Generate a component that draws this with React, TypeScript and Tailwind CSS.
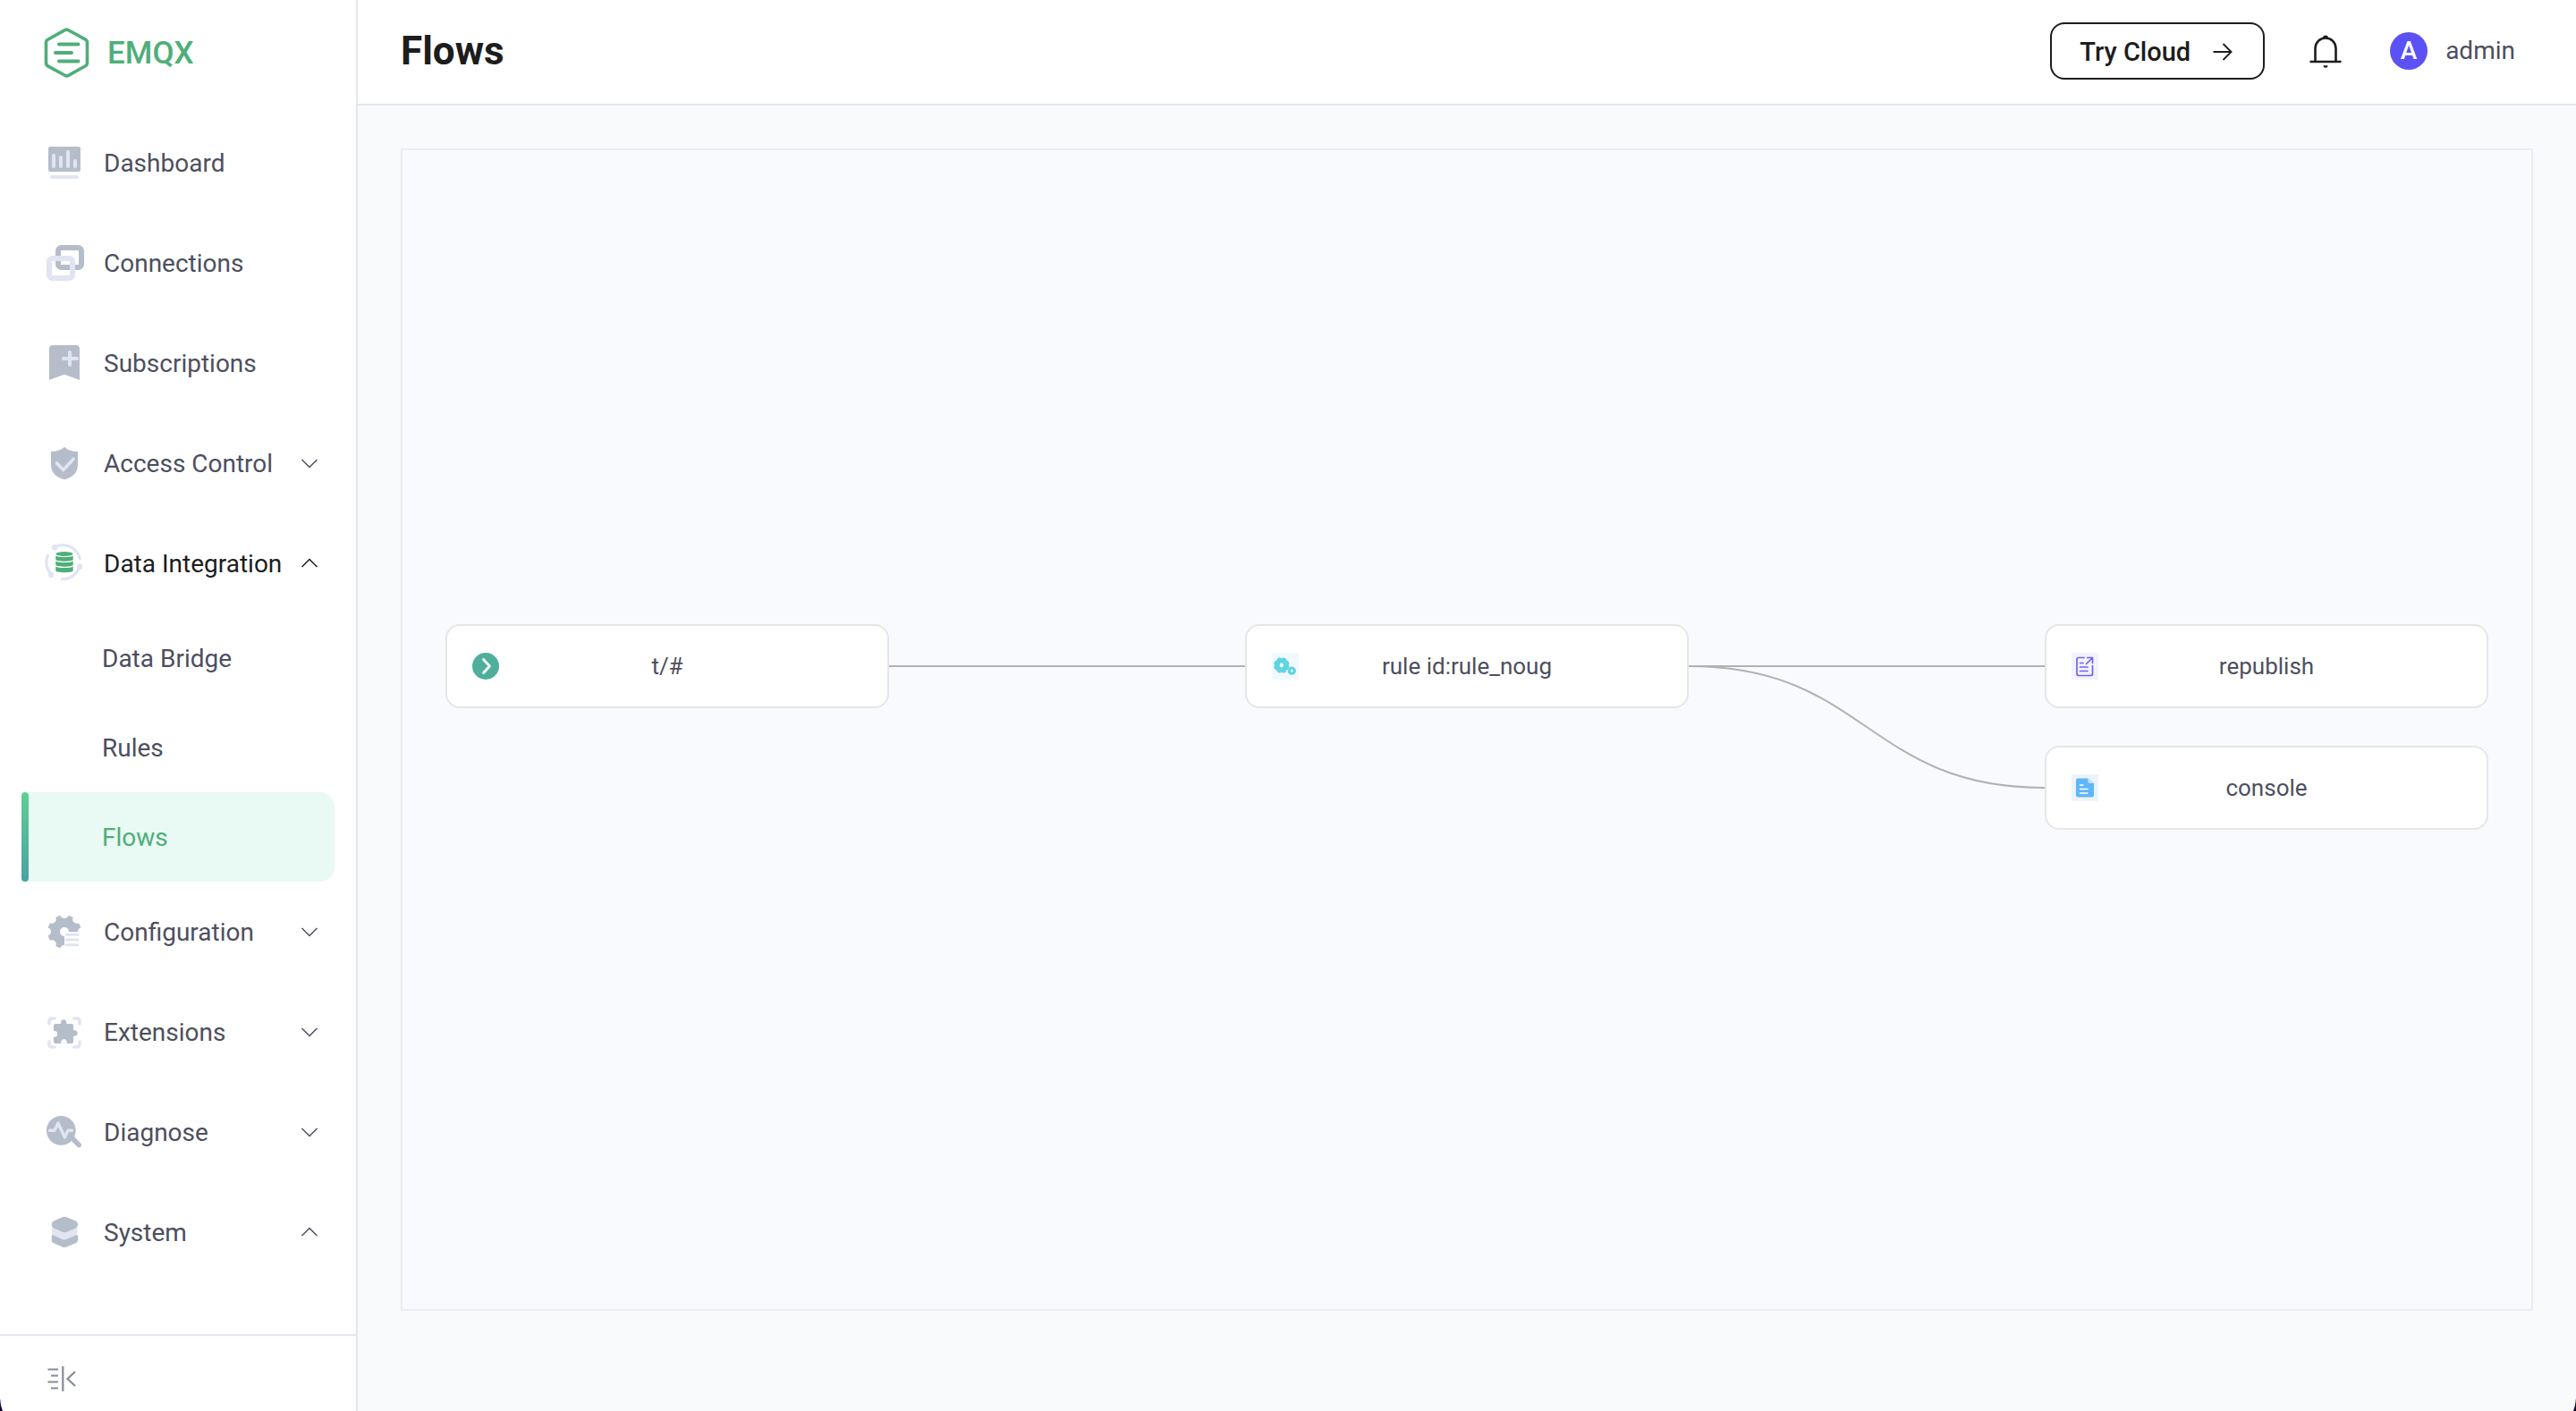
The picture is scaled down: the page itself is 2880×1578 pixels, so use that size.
import type { ReactNode } from "react";

const MUTED = "#b6bdca";
const LIGHT = "#e1e5f2";
const GREEN = "#4fae79";

function gearPath(cx: number, cy: number, r: number, half: number, notch: number, teeth = 8) {
  const at = (deg: number) => {
    const a = (deg * Math.PI) / 180;
    return `${(cx + r * Math.sin(a)).toFixed(2)} ${(cy - r * Math.cos(a)).toFixed(2)}`;
  };
  const step = 360 / teeth;
  let d = `M${at(-half)}`;
  for (let k = 0; k < teeth; k++) {
    d += `A${notch} ${notch} 0 0 0 ${at(k * step + half)}`;
    d += `A${r} ${r} 0 0 1 ${at((k + 1) * step - half)}`;
  }
  return d + "Z";
}

function MenuIcon({ children }: { children: ReactNode }) {
  return (
    <svg viewBox="0 0 48 48" className="size-12 shrink-0" fill="none" strokeLinecap="round" strokeLinejoin="round" aria-hidden="true">
      {children}
    </svg>
  );
}

const DashboardIcon = () => (
  <MenuIcon>
    <rect x="6" y="6" width="36" height="28" rx="2" fill={MUTED} />
    <path d="M12 16v12M20 18v10M28 12v16M36 22v6" stroke={LIGHT} strokeWidth="4" />
    <path d="M10 40h28" stroke={LIGHT} strokeWidth="4" />
  </MenuIcon>
);

const ConnectionsIcon = () => (
  <MenuIcon>
    <rect x="17" y="7" width="26" height="22" rx="3.5" stroke={MUTED} strokeWidth="6" />
    <rect x="7" y="19" width="26" height="22" rx="3.5" stroke={LIGHT} strokeWidth="6" />
  </MenuIcon>
);

const SubscriptionsIcon = () => (
  <MenuIcon>
    <path d="M7 43V8a4 4 0 0 1 4-4h26a4 4 0 0 1 4 4v35l-17-6.300z" fill={MUTED} />
    <path d="M23 19h15M30 12v14" stroke={LIGHT} strokeWidth="4" />
  </MenuIcon>
);

const AccessIcon = () => (
  <MenuIcon>
    <path d="M24 6c4 3.500 9 5 15 5v15c0 9-7 14.500-15 16.200C16 40.500 9 35 9 26V11c6 0 11-1.500 15-5z" fill={MUTED} />
    <path d="M15.500 24l7.300 7.500L34 19.500" stroke={LIGHT} strokeWidth="3.600" />
  </MenuIcon>
);

const IntegrationIcon = () => (
  <MenuIcon>
    <g stroke={LIGHT} strokeWidth="3.200" strokeLinecap="butt">
      <path d="M13 6A19.500 19.500 0 0 1 41.500 20" />
      <path d="M41 27A19.500 19.500 0 0 1 19.700 41.600" />
      <path d="M9 36A19.500 19.500 0 0 1 6 14" />
    </g>
    <g fill={LIGHT}>
      <circle cx="13.300" cy="6.200" r="3.300" />
      <circle cx="41" cy="27.700" r="3.300" />
      <circle cx="9" cy="36.700" r="3.300" />
    </g>
    <g fill={GREEN}>
      <ellipse cx="24" cy="13.500" rx="9.500" ry="2.600" />
      <path d="M14.300 15.500c3 2 16.400 2 19.400 0V20c-2 2.300-17.400 2.300-19.400 0z" />
      <path d="M14.300 21.500c3 2 16.400 2 19.400 0V26c-2 2.300-17.400 2.300-19.400 0z" />
      <path d="M14.300 27.500c3 2 16.400 2 19.400 0v5c-2 2.300-17.400 2.300-19.400 0z" />
    </g>
  </MenuIcon>
);

const ConfigurationIcon = () => (
  <MenuIcon>
    <path d={gearPath(24, 24, 18.8, 13.5, 4.6)} fill={MUTED} />
    <circle cx="24" cy="24" r="5" fill="#fff" />
    <path d="M24 24h22v22H24z" fill="#fff" />
    <path d="M26 27.300h13M26 33h13M26 38.700h13" stroke={LIGHT} strokeWidth="3" />
  </MenuIcon>
);

const ExtensionsIcon = () => (
  <MenuIcon>
    <path
      d="M7 15v-3a3 3 0 0 1 3-3h3M35 9h3a3 3 0 0 1 3 3v3M41 35v3a3 3 0 0 1-3 3h-3M13 41h-3a3 3 0 0 1-3-3v-3"
      stroke={LIGHT}
      strokeWidth="3.600"
    />
    <path
      d="M14 15h5.300c.5 0 .7-.3.700-.8a3.200 3.200 0 1 1 6.200 0c0 .5.200.8.700.800H32a2 2 0 0 1 2 2v4.500c0 .5.300.8.800.700a3.300 3.300 0 1 1 0 6.500c-.5 0-.8.200-.8.700V35a2 2 0 0 1-2 2h-4.500c-.5 0-.7-.3-.7-.8a3.300 3.300 0 1 0-6.500 0c0 .5-.2.800-.7.800H14a2 2 0 0 1-2-2v-4.600c0-.5.300-.7.800-.7a3.300 3.300 0 1 0 0-6.600c-.5 0-.8-.2-.8-.7V17a2 2 0 0 1 2-2z"
      fill={MUTED}
    />
  </MenuIcon>
);

const DiagnoseIcon = () => (
  <MenuIcon>
    <circle cx="20.300" cy="22.300" r="16.400" fill={MUTED} />
    <path d="M33 31l7.200 7.500" stroke={MUTED} strokeWidth="5.500" />
    <path d="M7.500 22.300h5.500L17 14l7.400 16L28 22.300h4.500" stroke={LIGHT} strokeWidth="3.400" />
  </MenuIcon>
);

const SystemIcon = () => (
  <MenuIcon>
    <path d="M9.700 29c0-3 4-3 14.300-3s15 0 15 3v4c0 1.500-.8 2.600-2.300 3.200L26.500 40.500c-1.700.7-3.300.7-5 0L12 36.200c-1.500-.6-2.300-1.700-2.300-3.200z" fill={MUTED} />
    <path d="M10 20.500c0-3 4-3 14-3s14.500 0 14.500 3v4c0 1.500-.8 2.600-2.300 3.200l-10 4.300c-1.500.6-3 .6-4.500 0l-9.400-4.300C10.800 27.100 10 26 10 24.500z" fill={LIGHT} />
    <path d="M21.700 7.200c1.600-.7 3.200-.7 4.800 0l10.200 4.200c3 1.500 3 6.500 0 8.100l-10.200 4.300c-1.600.7-3.200.7-4.800 0L12 19.500c-3-1.600-3-6.600 0-8.100z" fill={MUTED} />
  </MenuIcon>
);

function Chevron({ up = false }: { up?: boolean }) {
  return (
    <svg viewBox="0 0 20 20" className="size-5 shrink-0" fill="none" stroke="currentColor" strokeWidth="1.500" aria-hidden="true">
      <path d={up ? "M1.500 14L10 5.500l8.500 8.500" : "M1.500 6l8.500 8.500L18.500 6"} />
    </svg>
  );
}

type Item = {
  label: string;
  icon: ReactNode;
  group?: "open" | "closed";
  active?: boolean;
  children?: { label: string; active?: boolean }[];
};

const MENU: Item[] = [
  { label: "Dashboard", icon: <DashboardIcon /> },
  { label: "Connections", icon: <ConnectionsIcon /> },
  { label: "Subscriptions", icon: <SubscriptionsIcon /> },
  { label: "Access Control", icon: <AccessIcon />, group: "closed" },
  {
    label: "Data Integration",
    icon: <IntegrationIcon />,
    group: "open",
    active: true,
    children: [{ label: "Data Bridge" }, { label: "Rules" }, { label: "Flows", active: true }],
  },
  { label: "Configuration", icon: <ConfigurationIcon />, group: "closed" },
  { label: "Extensions", icon: <ExtensionsIcon />, group: "closed" },
  { label: "Diagnose", icon: <DiagnoseIcon />, group: "closed" },
  { label: "System", icon: <SystemIcon />, group: "open" },
];

function MenuRow({ item }: { item: Item }) {
  const body = (
    <>
      {item.icon}
      <span className="flex-1 pt-0.5 text-left">{item.label}</span>
    </>
  );
  const row = "flex h-28 w-full items-center gap-5 pl-12 pr-[42px]";
  return (
    <li>
      {item.group ? (
        <button
          type="button"
          aria-expanded={item.group === "open"}
          className={item.active ? `${row} text-[#1d1d1d]` : row}
        >
          {body}
          <Chevron up={item.group === "open"} />
        </button>
      ) : (
        <a href="#" className={row}>
          {body}
        </a>
      )}
      {item.children && (
        <ul className="px-6">
          {item.children.map((c) => (
            <li key={c.label}>
              {c.active ? (
                <a href="#" aria-current="page" className="flex h-25 items-center rounded-l-sm rounded-r-2xl bg-[#e9f9f4] text-[#4fae79]">
                  <span className="h-full w-2 rounded-sm bg-linear-to-b from-[#5fcf92] to-[#48a3a2]" />
                  <span className="pt-0.5 pl-[82px]">{c.label}</span>
                </a>
              ) : (
                <a href="#" className="flex h-25 items-center pt-0.5 pl-[90px]">
                  {c.label}
                </a>
              )}
            </li>
          ))}
        </ul>
      )}
    </li>
  );
}

function FlowNode({ icon, label }: { icon: ReactNode; label: string }) {
  return (
    <div className="grid h-[94px] grid-cols-[30px_1fr_30px] items-center rounded-2xl border-2 border-[#e6e6e6] bg-white px-7">
      {icon}
      <span className="text-center">{label}</span>
    </div>
  );
}

const NodeIcon = ({ children }: { children: ReactNode }) => (
  <svg viewBox="0 0 30 30" className="size-[30px]" fill="none" strokeLinecap="round" strokeLinejoin="round" aria-hidden="true">
    {children}
  </svg>
);

const SourceIcon = () => (
  <NodeIcon>
    <circle cx="15" cy="15" r="15" fill="#50ae9c" />
    <path d="M12.500 7.500l7 7.500-7 7.500" stroke="#fff" strokeWidth="2.800" />
  </NodeIcon>
);

const RuleIcon = () => (
  <NodeIcon>
    <rect width="30" height="30" rx="1" fill="#f1f9fe" />
    <path fillRule="evenodd" d={`${gearPath(10.8, 14, 8.8, 10, 2)}M13 14a2.200 2.400 0 1 0-4.400 0a2.200 2.400 0 1 0 4.400 0z`} fill="#5fd5e0" />
    <path fillRule="evenodd" d={`${gearPath(22.3, 20.2, 4.7, 9, 1)}M23.700 20.200a1.400 1.400 0 1 0-2.800 0a1.400 1.400 0 1 0 2.800 0z`} fill="#5fd5e0" />
  </NodeIcon>
);

const RepublishIcon = () => (
  <NodeIcon>
    <rect width="30" height="30" rx="1" fill="#f3f2fd" />
    <g stroke="#7164f3" strokeWidth="1.700">
      <path d="M14 5.500H8A2 2 0 0 0 6 7.500v16a2 2 0 0 0 2 2h13.500a2 2 0 0 0 2-2V14.500" />
      <path d="M17.500 5.500h6v6M23.500 5.500l-7 7" />
      <path d="M9.500 11.500h3.500M9.500 16h8.500M9.500 20.500h8.500" />
    </g>
  </NodeIcon>
);

const ConsoleIcon = () => (
  <NodeIcon>
    <rect width="30" height="30" rx="1" fill="#edf3fa" />
    <path d="M7.500 4.500h10.800L25 10v13.500a2 2 0 0 1-2 2H7a2 2 0 0 1-2-2V6.500a2 2 0 0 1 2-2z" fill="#5fb6f8" />
    <path d="M18.300 4.500L25 10h-4.700a2 2 0 0 1-2-2z" fill="#c3e1f9" />
    <path d="M9.500 12h3.500M9.500 16.500h8.500M9.500 21h8.500" stroke="#fff" strokeWidth="1.500" />
  </NodeIcon>
);

function Edges({ paths }: { paths: string[] }) {
  return (
    <svg viewBox="0 0 396 230" preserveAspectRatio="none" className="h-[230px] w-full" fill="none" stroke="#b1b1b7" strokeWidth="2" aria-hidden="true">
      {paths.map((d) => (
        <path key={d} d={d} vectorEffect="non-scaling-stroke" />
      ))}
    </svg>
  );
}

export default function App() {
  return (
    <div className="relative flex min-h-screen bg-[#f9fafc] font-['Roboto',sans-serif] text-[28px] leading-9 text-[#4d4f5e]">
      <aside className="flex w-[400px] shrink-0 flex-col border-r-2 border-[#e6e6ef] bg-white">
        <div className="flex h-[118px] items-center gap-[18px] pl-12">
          <svg viewBox="0 0 54 60" className="h-[60px] w-[54px]" fill="none" stroke={GREEN} strokeLinecap="round" strokeLinejoin="round" aria-hidden="true">
            <path d="M24.500 4.700a4 4 0 0 1 4 0l19 10.500a4 4 0 0 1 2 3.500v22.600a4 4 0 0 1-2 3.500l-19 10.500a4 4 0 0 1-4 0l-19-10.500a4 4 0 0 1-2-3.500V18.700a4 4 0 0 1 2-3.500z" strokeWidth="3.600" />
            <path d="M18 20.500h21.500M14 30h18M18 39.500h21.500" strokeWidth="4" />
          </svg>
          <span className="pt-0.5 text-[35px] font-medium text-[#4fae79]">EMQX</span>
        </div>
        <nav className="flex-1 pt-2" aria-label="Main">
          <ul>
            {MENU.map((item) => (
              <MenuRow key={item.label} item={item} />
            ))}
          </ul>
        </nav>
        <div className="flex h-[86px] items-center border-t-2 border-[#e6e6ef] pl-12 pt-3">
          <button type="button" aria-label="Collapse menu">
            <svg viewBox="0 0 42 36" className="h-9 w-[42px]" fill="none" stroke="#858b99" strokeWidth="2.200" aria-hidden="true">
              <path d="M5.500 7.500H17M9 14.500h8M5.500 21.500H17M9 28.500h8M22.300 4v28M36 10l-8.500 8 8.500 8" />
            </svg>
          </button>
        </div>
      </aside>

      <div className="flex min-w-0 flex-1 flex-col">
        <header className="flex h-[118px] items-center border-b-2 border-[#e6e6ef] bg-white pr-[68px] pb-0.5 pl-12">
          <h1 className="flex-1 text-[44px] leading-[52px] font-bold text-[#1d1d1d]">Flows</h1>
          <button type="button" className="flex h-16 items-center gap-[22px] rounded-2xl border-2 border-[#1d1d1d] px-[31px] pt-0.5 text-[29px] font-medium text-[#1d1d1d]">
            Try Cloud
            <svg viewBox="0 0 28 28" className="size-7" fill="none" stroke="currentColor" strokeWidth="1.900" aria-hidden="true">
              <path d="M3.500 14h20M14.500 5l9 9-9 9" />
            </svg>
          </button>
          <button type="button" aria-label="Notifications" className="ml-12 text-[#1d1d1d]">
            <svg viewBox="0 0 40 40" className="size-10" fill="none" stroke="currentColor" strokeWidth="2.600" aria-hidden="true">
              <path d="M2.500 32h35M8.500 32V17a11.500 11.500 0 0 1 23 0v15" />
              <path d="M17 5.500a3 3 0 0 1 6 0zM17.500 36.200h5a2.500 2.500 0 0 1-5 0z" fill="currentColor" stroke="none" />
            </svg>
          </button>
          <button type="button" className="ml-13 flex items-center gap-5">
            <span className="flex size-[42px] items-center justify-center rounded-full bg-[#5b51f5] font-medium text-white">A</span>
            admin
          </button>
        </header>

        <main className="flex flex-1 flex-col px-12 pt-12 pb-28">
          <div className="grid flex-1 grid-cols-[496px_1fr_496px_1fr_496px] content-center border-2 border-[#ececf3] bg-[#f9fafe] px-12 pb-1.5 text-[26px]">
            <FlowNode icon={<SourceIcon />} label="t/#" />
            <Edges paths={["M0 47H396"]} />
            <FlowNode icon={<RuleIcon />} label="rule id:rule_noug" />
            <Edges paths={["M0 47H396", "M0 47C198 47 198 183 396 183"]} />
            <div className="flex flex-col gap-[42px]">
              <FlowNode icon={<RepublishIcon />} label="republish" />
              <FlowNode icon={<ConsoleIcon />} label="console" />
            </div>
          </div>
        </main>
      </div>

      <svg viewBox="0 0 3 14" className="absolute bottom-0 left-0 h-3.5 w-[3px]" aria-hidden="true">
        <path d="M0 0Q.5 8 3 14H0z" fill="#12052f" />
      </svg>
      <svg viewBox="0 0 3 14" className="absolute right-0 bottom-0 h-3.5 w-[3px]" aria-hidden="true">
        <path d="M3 0Q2.500 8 0 14H3z" fill="#12052f" />
      </svg>
    </div>
  );
}
